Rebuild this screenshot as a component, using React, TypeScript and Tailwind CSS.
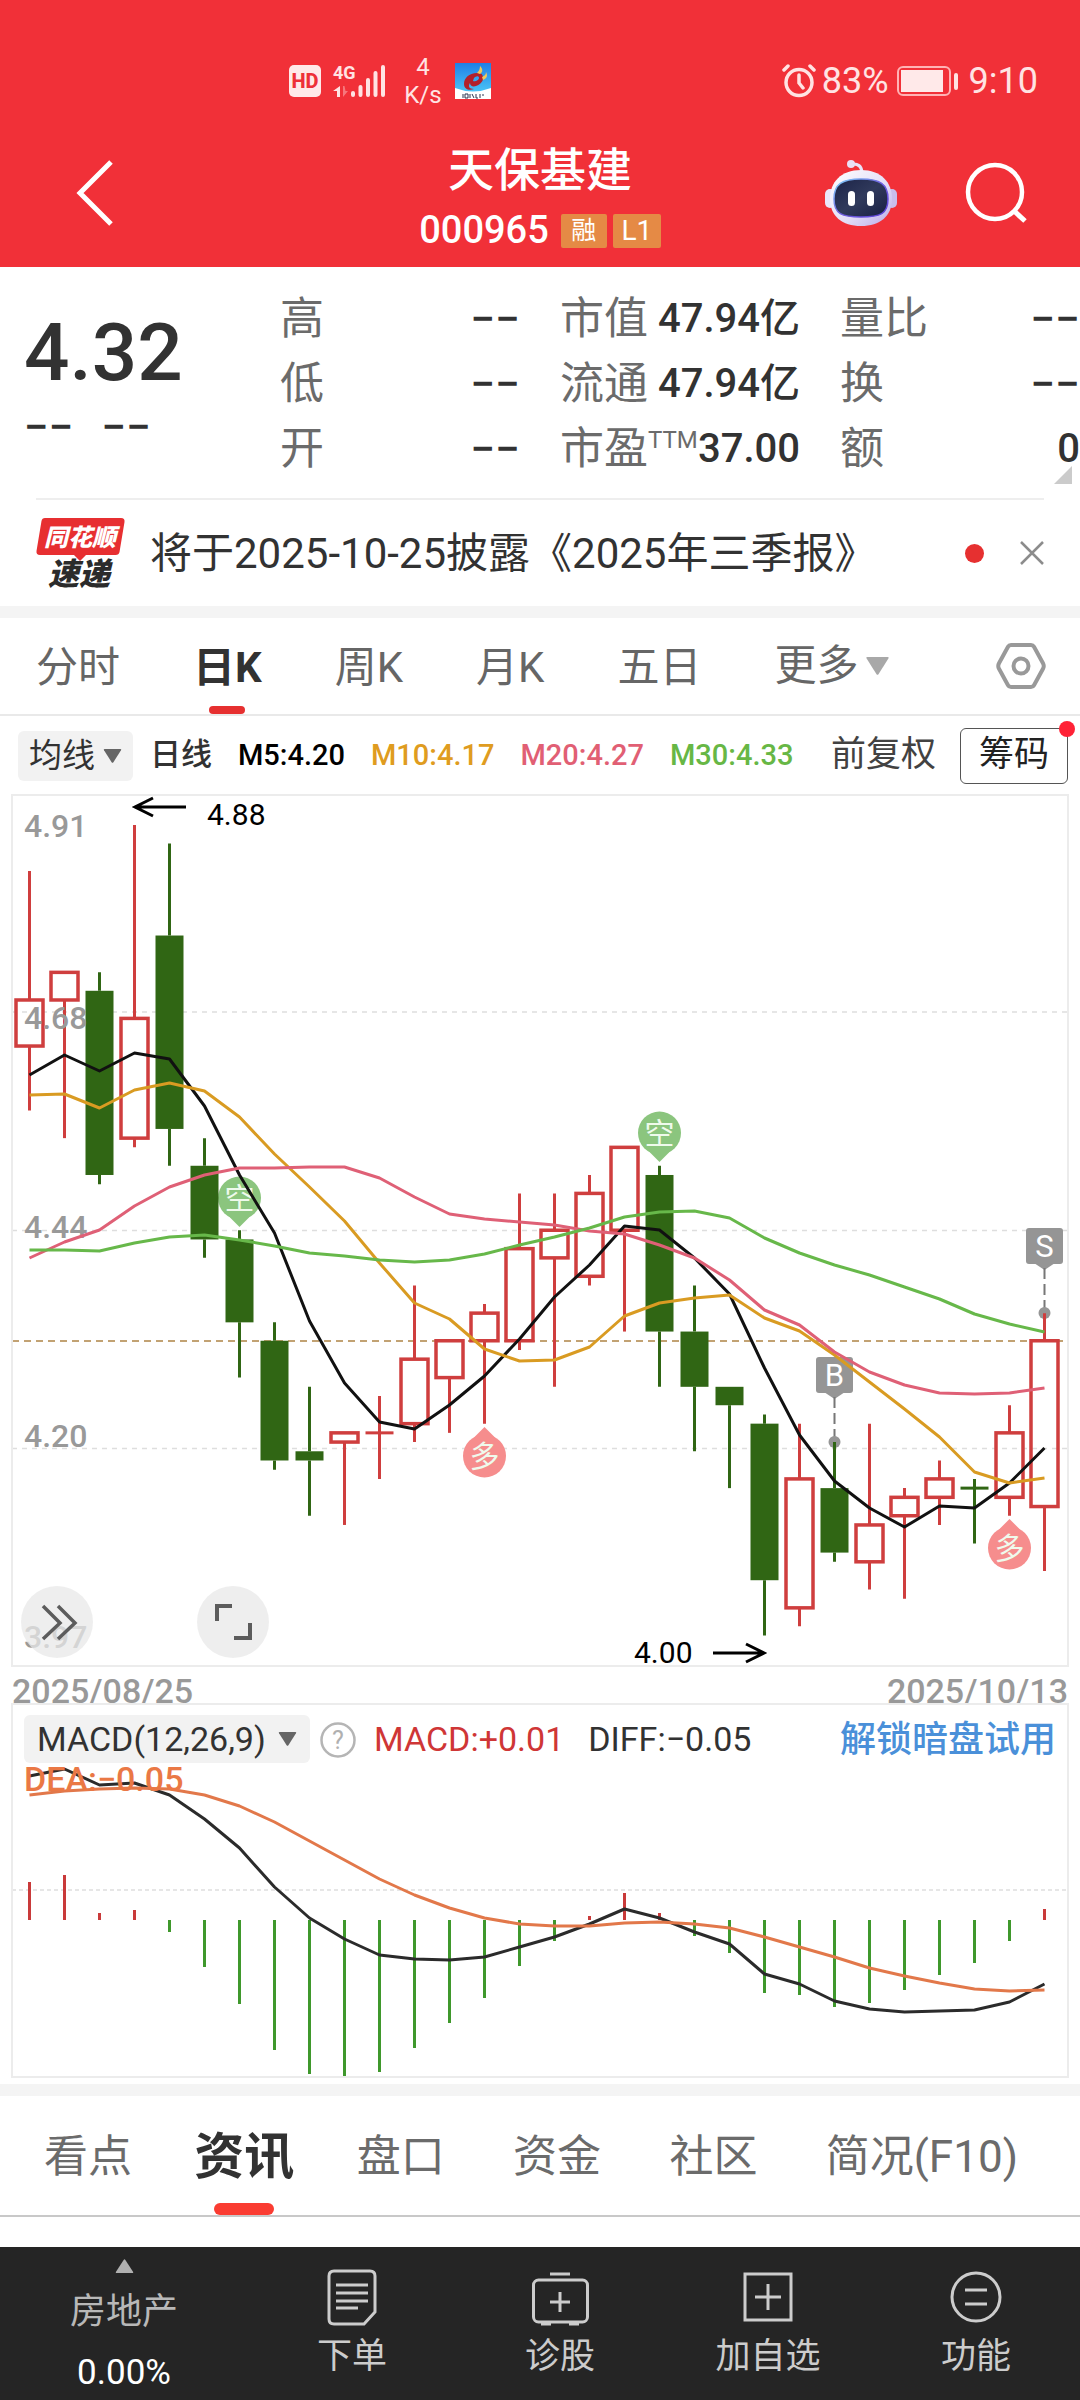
import React from 'react';
import clsx from 'clsx';

// high, body top, body bottom, low, direction
type Candle = [number, number, number, number, 'up' | 'down'];

const candles: Candle[] = [
  [4.83, 4.69, 4.64, 4.57, 'up'],
  [4.72, 4.72, 4.69, 4.54, 'up'],
  [4.72, 4.7, 4.5, 4.49, 'down'],
  [4.88, 4.67, 4.54, 4.53, 'up'],
  [4.86, 4.76, 4.55, 4.51, 'down'],
  [4.54, 4.51, 4.43, 4.41, 'down'],
  [4.44, 4.43, 4.34, 4.28, 'down'],
  [4.34, 4.32, 4.19, 4.18, 'down'],
  [4.27, 4.2, 4.19, 4.13, 'down'],
  [4.22, 4.22, 4.21, 4.12, 'up'],
  [4.26, 4.22, 4.22, 4.17, 'up'],
  [4.38, 4.3, 4.23, 4.21, 'up'],
  [4.32, 4.32, 4.28, 4.22, 'up'],
  [4.36, 4.35, 4.32, 4.23, 'up'],
  [4.48, 4.42, 4.32, 4.31, 'up'],
  [4.48, 4.44, 4.41, 4.27, 'up'],
  [4.5, 4.48, 4.39, 4.38, 'up'],
  [4.53, 4.53, 4.44, 4.33, 'up'],
  [4.51, 4.5, 4.33, 4.27, 'down'],
  [4.38, 4.33, 4.27, 4.2, 'down'],
  [4.27, 4.27, 4.25, 4.16, 'down'],
  [4.24, 4.23, 4.06, 4.0, 'down'],
  [4.23, 4.17, 4.03, 4.01, 'up'],
  [4.21, 4.16, 4.09, 4.08, 'down'],
  [4.23, 4.12, 4.08, 4.05, 'up'],
  [4.16, 4.15, 4.13, 4.04, 'up'],
  [4.19, 4.17, 4.15, 4.12, 'up'],
  [4.17, 4.16, 4.16, 4.1, 'down'],
  [4.25, 4.22, 4.15, 4.13, 'up'],
  [4.35, 4.32, 4.14, 4.07, 'up'],
];

const ma5 = [1075, 1055, 1071, 1053, 1059, 1106, 1175, 1233, 1321, 1383, 1422, 1429, 1405, 1376, 1339, 1297, 1265, 1226, 1230, 1258, 1294, 1368, 1435, 1481, 1508, 1527, 1506, 1508, 1483, 1448];
const ma10 = [1095, 1094, 1108, 1090, 1083, 1091, 1117, 1154, 1187, 1221, 1263, 1303, 1319, 1349, 1361, 1360, 1347, 1316, 1303, 1298, 1295, 1318, 1331, 1355, 1382, 1409, 1437, 1472, 1483, 1478];
const ma20 = [1258, 1242, 1230, 1206, 1187, 1175, 1168, 1168, 1167, 1167, 1178, 1197, 1214, 1219, 1222, 1225, 1231, 1234, 1245, 1258, 1280, 1310, 1325, 1352, 1372, 1385, 1393, 1394, 1393, 1388];
const ma30 = [1250, 1250, 1251, 1243, 1237, 1235, 1240, 1246, 1253, 1256, 1260, 1262, 1260, 1254, 1245, 1237, 1228, 1217, 1212, 1211, 1218, 1238, 1253, 1265, 1275, 1287, 1299, 1314, 1324, 1332];

const macdBars = [1882, 1875, 1913, 1910, 1932, 1967, 2004, 2050, 2074, 2077, 2072, 2048, 2023, 1998, 1966, 1941, 1916, 1893, 1913, 1936, 1953, 1993, 1995, 2007, 2003, 1990, 1975, 1963, 1941, 1909];
const diffLine = [1776, 1769, 1785, 1783, 1795, 1819, 1848, 1887, 1918, 1939, 1955, 1959, 1960, 1957, 1947, 1937, 1924, 1909, 1918, 1932, 1944, 1974, 1984, 2001, 2009, 2012, 2011, 2010, 2002, 1984];
const deaLine = [1795, 1791, 1789, 1788, 1789, 1795, 1806, 1822, 1841, 1860, 1879, 1895, 1908, 1918, 1924, 1926, 1926, 1923, 1922, 1924, 1928, 1937, 1947, 1957, 1968, 1976, 1983, 1989, 1991, 1990];

const UP = '#cf3e3e';
const DOWN = '#306614';

const xAt = (i: number) => 29.5 + i * 35;
const yAt = (price: number) => 825 + (4.88 - price) * 921;
const toPoints = (ys: number[]) => ys.map((y, i) => `${xAt(i)},${y}`).join(' ');

const Caret: React.FC<{ className?: string }> = ({ className }) => (
  <svg viewBox="0 0 20 16" className={className} aria-hidden="true">
    <path d="M1 0h18q1.500 0 .7 1.400L11 15q-1 1.500-2 0L.3 1.400Q-.5 0 1 0z" fill="currentColor" />
  </svg>
);

const StatusBar: React.FC = () => (
  <div className="flex h-[118px] items-center pr-[42px] pl-[289px] pt-11 text-[#ffe3e3]">
    <svg viewBox="0 0 32 32" className="size-8">
      <rect width="32" height="32" rx="5" fill="#ffe9e9" />
      <text x="16" y="23" fontSize="20" fontWeight="800" textAnchor="middle" fill="#ee3038">HD</text>
    </svg>
    <svg viewBox="0 0 54 34" className="ml-3 h-[34px] w-[54px] overflow-visible">
      <text x="0" y="15" fontSize="18" fontWeight="700" fill="currentColor">4G</text>
      <path d="M7 22v11H4v-6H0z" fill="currentColor" />
      <path d="M10 22v11l5-6h-2.500l-1-5z" fill="currentColor" opacity=".4" />
      <g stroke="currentColor" strokeWidth="4" strokeLinecap="round">
        <path d="M20 29v2M27.500 23v8M35 16v15M42.500 9v22M50 3v28" />
      </g>
    </svg>
    <div className="ml-4 w-10 text-center text-2xl leading-7">
      <div>4</div>
      <div>K/s</div>
    </div>
    <svg viewBox="0 0 36 36" className="ml-3 size-9">
      <defs>
        <linearGradient id="sky" x1="0" y1="0" x2="0" y2="1">
          <stop offset="0" stopColor="#1f7fe6" />
          <stop offset="1" stopColor="#4ac3f6" />
        </linearGradient>
      </defs>
      <rect width="36" height="36" fill="#fff" />
      <path d="M0 0h36v25q-18 7-36 0z" fill="url(#sky)" />
      <path d="M22 10c-8 0-13 5-13 11 0 5 5 7 10 5-5 0-6-3-4-6 0 3 3 4 6 3 7-2 10-10 4-13-3-1-8 3-7 6 2-3 6-4 6-1 0 2-4 4-6 3 1-4 3-6 4-8z" fill="#b3202a" />
      <path d="M22 10c2-2 3-4 3-7 3 3 3 6 0 8zM27 14c3-1 4-3 4-5 2 4 1 6-3 8z" fill="#f3c85a" />
      <path d="M8 31v4M10 31h3v4h-3zM15 31v4M17 31l2 4M21 31v4h2M25 31v4M27 32h2" stroke="#2b3550" strokeWidth="1" fill="none" />
    </svg>
    <div className="ml-auto flex items-center text-4xl">
      <svg viewBox="0 0 34 34" className="size-[34px]" fill="none" stroke="currentColor" strokeWidth="3.500" strokeLinecap="round">
        <circle cx="17" cy="18.500" r="13" />
        <path d="M17 11v8l4 5M2 6l4-4M32 6l-4-4" />
      </svg>
      <span className="ml-1.5">83%</span>
      <svg viewBox="0 0 62 30" className="ml-2 h-[30px] w-[62px]">
        <rect x="1" y="1" width="52" height="28" rx="5" fill="none" stroke="#ffb3b5" strokeWidth="2" />
        <rect x="4" y="4" width="42" height="22" fill="#ffe9e9" />
        <rect x="57" y="7" width="4" height="17" rx="2" fill="currentColor" />
      </svg>
      <span className="ml-2.5">9:10</span>
    </div>
  </div>
);

const RobotIcon: React.FC = () => (
  <svg viewBox="0 0 72 68" className="h-[68px] w-[72px]">
    <defs>
      <linearGradient id="shell" x1="0" y1="0" x2="1" y2="1">
        <stop offset="0" stopColor="#ffffff" />
        <stop offset=".6" stopColor="#e2dcf7" />
        <stop offset="1" stopColor="#b9a9e8" />
      </linearGradient>
      <linearGradient id="face" x1="0" y1="0" x2="1" y2="1">
        <stop offset="0" stopColor="#1c2347" />
        <stop offset=".5" stopColor="#303a5c" />
        <stop offset="1" stopColor="#181f42" />
      </linearGradient>
      <linearGradient id="rim" x1="0" y1="0" x2="1" y2="1">
        <stop offset="0" stopColor="#7fd3f7" />
        <stop offset=".5" stopColor="#6f5fe0" />
        <stop offset="1" stopColor="#5b3fd6" />
      </linearGradient>
    </defs>
    <path d="M27 5q9-1 10 8" fill="none" stroke="#e9e2f8" strokeWidth="3" />
    <circle cx="26" cy="5" r="4" fill="#eadff5" />
    <rect x="0" y="30" width="10" height="19" rx="5" fill="#eae6fa" />
    <rect x="62" y="30" width="10" height="19" rx="5" fill="#c9bdec" />
    <path d="M36 11c20 0 31 12 31 29S55 67 36 67 5 57 5 40s11-29 31-29z" fill="url(#shell)" />
    <path d="M36 20c19 0 27 5 27 20s-8 18-27 18S9 55 9 40s8-20 27-20z" fill="url(#face)" stroke="url(#rim)" strokeWidth="1.500" />
    <rect x="23" y="32" width="7" height="15" rx="3.500" fill="#fff" />
    <rect x="42" y="32" width="7" height="15" rx="3.500" fill="#fff" />
  </svg>
);

const Header: React.FC = () => (
  <header className="bg-[#f13038] text-white">
    <StatusBar />
    <div className="grid h-[149px] grid-cols-[1fr_auto_1fr] items-center">
      <button type="button" aria-label="返回" className="ml-[74px] w-10">
        <svg viewBox="0 0 40 66" className="h-[66px] w-10">
          <path d="M37 2L6 33l31 31" fill="none" stroke="currentColor" strokeWidth="5" />
        </svg>
      </button>
      <div className="flex flex-col items-center pt-3">
        <h1 className="text-[46px] leading-[56px] font-medium">天保基建</h1>
        <div className="mt-2 flex h-[50px] items-center">
          <span className="text-[38px] font-medium">000965</span>
          <span className="ml-3 flex h-[34px] w-[46px] items-center justify-center rounded-xs bg-[#e58a45] text-[25px]">融</span>
          <span className="ml-1.5 flex h-[34px] w-12 items-center justify-center rounded-xs bg-[#e58a45] text-[28px]">L1</span>
        </div>
      </div>
      <div className="flex items-center justify-end gap-[68px] pr-[53px]">
        <button type="button" aria-label="智能助手">
          <RobotIcon />
        </button>
        <button type="button" aria-label="搜索">
          <svg viewBox="0 0 62 62" className="size-[62px]" fill="none" stroke="currentColor" strokeWidth="4.500">
            <circle cx="30" cy="30" r="27" />
            <path d="M48 48l12 11" strokeWidth="5" />
          </svg>
        </button>
      </div>
    </div>
  </header>
);

const quoteColumns: { label: string; sup?: string; value: string }[][] = [
  [
    { label: '高', value: '−−' },
    { label: '低', value: '−−' },
    { label: '开', value: '−−' },
  ],
  [
    { label: '市值', value: '47.94亿' },
    { label: '流通', value: '47.94亿' },
    { label: '市盈', sup: 'TTM', value: '37.00' },
  ],
  [
    { label: '量比', value: '−−' },
    { label: '换', value: '−−' },
    { label: '额', value: '0' },
  ],
];

const Quote: React.FC = () => (
  <section className="relative flex h-[231px]">
    <div className="w-[280px] shrink-0 pt-[38px] pl-6 text-[#323232]">
      <div className="text-[80px] leading-[96px] font-medium">4.32</div>
      <div className="flex gap-7 text-[44px] leading-[52px] font-medium">
        <span>−−</span>
        <span>−−</span>
      </div>
    </div>
    <div className="grid flex-1 grid-cols-3 gap-10 pt-[19px]">
      {quoteColumns.map((rows, i) => (
        <dl key={i}>
          {rows.map((row) => (
            <div key={row.label} className="flex h-[65px] items-center justify-between whitespace-nowrap">
              <dt className="flex text-[44px] text-[#6b6b6b]">
                {row.label}
                {row.sup && <span className="pt-2 text-2xl">{row.sup}</span>}
              </dt>
              <dd
                className={clsx(
                  'font-medium text-[#323232]',
                  row.value === '−−' ? 'text-[44px]' : 'text-[40px]',
                )}
              >
                {row.value}
              </dd>
            </div>
          ))}
        </dl>
      ))}
    </div>
    <svg viewBox="0 0 18 18" className="absolute right-2 bottom-3.5 size-[18px]">
      <path d="M18 0v18H0z" fill="#cbcbcb" />
    </svg>
  </section>
);

const News: React.FC = () => (
  <section className="mx-9 flex h-[108px] items-center border-t-2 border-[#eeeeee]">
    <svg viewBox="0 0 90 72" className="h-[72px] w-[90px] shrink-0 overflow-visible">
      <path d="M9 1h76q4 0 3.500 4l-5 30q-.5 3-4 3H50l-6 6-6-6H4q-4 0-3.500-4l5-30Q6 1 9 1z" fill="#e72f31" />
      <text x="44" y="29" fontSize="24" fontWeight="900" fontStyle="italic" textAnchor="middle" fill="#fff">同花顺</text>
      <text x="43" y="68" fontSize="31" fontWeight="900" fontStyle="italic" textAnchor="middle" fill="#2b2b2b">速递</text>
    </svg>
    <a href="#news" className="ml-6 text-[42px] whitespace-nowrap text-[#323232]">将于2025-10-25披露《2025年三季报》</a>
    <span className="ml-auto size-[19px] rounded-full bg-[#e63030]" />
    <button type="button" aria-label="关闭" className="ml-9">
      <svg viewBox="0 0 24 24" className="size-6">
        <path d="M1 1l22 22M23 1L1 23" stroke="#8c8c8c" strokeWidth="2.500" />
      </svg>
    </button>
  </section>
);

const periods = ['分时', '日K', '周K', '月K', '五日'];

const PeriodTabs: React.FC = () => (
  <nav className="flex h-[98px] items-stretch gap-[73px] border-b-2 border-[#e9e9e9] pr-[34px] pl-9 text-[42px] text-[#666666]">
    {periods.map((name) => {
      const active = name === '日K';
      return (
        <button
          key={name}
          type="button"
          className={clsx('flex flex-col items-center whitespace-nowrap', active && 'font-bold text-[#323232]')}
        >
          <span className="flex-1 leading-[100px]">{name}</span>
          {active && <span className="-mt-3 h-[9px] w-9 rounded-full bg-[#e63030]" />}
        </button>
      );
    })}
    <button type="button" aria-haspopup="menu" className="flex items-center gap-2 leading-[100px] whitespace-nowrap">
      更多
      <Caret className="h-[18px] w-[23px] text-[#a8a8a8]" />
    </button>
    <button type="button" aria-label="设置" className="ml-auto">
      <svg viewBox="0 0 50 48" className="h-12 w-[50px]" fill="none" stroke="#999999" strokeWidth="4">
        <path d="M15 3h20q2 0 3 1.800l9 16.400q1.500 2.800 0 5.600l-9 16.400Q37 45 35 45H15q-2 0-3-1.800L3 26.800q-1.500-2.800 0-5.600L12 4.800Q13 3 15 3z" />
        <circle cx="25" cy="24" r="7.500" />
      </svg>
    </button>
  </nav>
);

const Indicators: React.FC = () => (
  <section className="flex h-[79px] items-center pr-3 pl-[18px] text-[29px] font-medium whitespace-nowrap">
    <div className="flex h-[50px] items-center gap-2 rounded-md bg-[#f2f2f2] px-[11px] font-normal text-[#323232]">
      <select aria-label="指标" className="appearance-none bg-transparent text-[33px]">
        <option>均线</option>
      </select>
      <Caret className="h-[14px] w-[19px] text-[#666666]" />
    </div>
    <span className="ml-[17px] text-[31px] text-[#323232]">日线</span>
    <span className="ml-[26px] text-black">M5:4.20</span>
    <span className="ml-[26px] text-[#df9c20]">M10:4.17</span>
    <span className="ml-[26px] text-[#e15f74]">M20:4.27</span>
    <span className="ml-[26px] text-[#67b745]">M30:4.33</span>
    <div className="ml-auto flex items-center gap-6 text-[35px] font-normal text-[#424242]">
      <button type="button">前复权</button>
      <button type="button" className="relative h-14 rounded-md border border-[#555555] px-[18px] text-[#222222]">
        筹码
        <span className="absolute -top-2 -right-2 size-4 rounded-full bg-[#ff2236]" />
      </button>
    </div>
  </section>
);

const SignalPin: React.FC<{ x: number; y: number; label: '空' | '多' }> = ({ x, y, label }) => {
  const color = label === '空' ? '#8bc57e' : '#f68d8d';
  const d = label === '空' ? -1 : 1;
  return (
    <g>
      <circle cx={x} cy={y} r="21.500" fill={color} />
      <path d={`M${x - 11} ${y - d * 18}L${x} ${y - d * 29}L${x + 11} ${y - d * 18}z`} fill={color} />
      <text x={x} y={y + 11} fontSize="30" textAnchor="middle" fill="#effaec">{label}</text>
    </g>
  );
};

const TradeFlag: React.FC<{ x: number; y: number; label: string }> = ({ x, y, label }) => (
  <g>
    <rect x={x - 18.5} y={y} width="37" height="36" rx="3" fill="#959595" />
    <path d={`M${x - 9} ${y + 36}h18l-9 6z`} fill="#959595" />
    <path d={`M${x} ${y + 40}v45`} stroke="#777777" strokeWidth="2" strokeDasharray="11 5" />
    <circle cx={x} cy={y + 85} r="6" fill="#959595" />
    <text x={x} y={y + 29} fontSize="31" textAnchor="middle" fill="#ffffff">{label}</text>
  </g>
);

const CandleChart: React.FC = () => (
  <svg viewBox="12 795 1056 871" className="block w-full overflow-visible">
    <g stroke="#dedede" strokeWidth="1.500" strokeDasharray="5 5">
      <path d="M12 1012h1056M12 1230.500h1056M12 1448.500h1056" />
    </g>
    <path d="M12 1341h1056" stroke="#c2a273" strokeWidth="2" strokeDasharray="7 5" />
    <SignalPin x={239.5} y={1198} label="空" />
    <TradeFlag x={834.5} y={1357} label="B" />
    <TradeFlag x={1044.5} y={1228} label="S" />
    {candles.map(([high, top, bottom, low, dir], i) => {
      const x = xAt(i);
      const color = dir === 'up' ? UP : DOWN;
      const flat = top === bottom;
      return (
        <g key={i} stroke={color} strokeWidth="3">
          <path d={`M${x} ${yAt(high)}V${yAt(top)}M${x} ${yAt(bottom)}V${yAt(low)}`} />
          {flat && <path d={`M${x - 14} ${yAt(top)}h28`} />}
          {!flat && dir === 'up' && (
            <rect x={x - 13.5} y={yAt(top)} width="27" height={yAt(bottom) - yAt(top)} fill="none" strokeWidth="3.500" />
          )}
          {!flat && dir === 'down' && (
            <rect x={x - 14} y={yAt(top)} width="28" height={yAt(bottom) - yAt(top)} fill={color} stroke="none" />
          )}
        </g>
      );
    })}
    <g fontSize="32" fontWeight="500" fill="#999999">
      <text x="24" y="837">4.91</text>
      <text x="24" y="1029">4.68</text>
      <text x="24" y="1238">4.44</text>
      <text x="24" y="1447">4.20</text>
      <text x="24" y="1648">3.97</text>
    </g>
    <g fill="none" strokeWidth="3" strokeLinejoin="round">
      <polyline points={toPoints(ma5)} stroke="#111111" />
      <polyline points={toPoints(ma10)} stroke="#d99b22" />
      <polyline points={toPoints(ma20)} stroke="#df6076" />
      <polyline points={toPoints(ma30)} stroke="#67b84a" />
    </g>
    <SignalPin x={659.5} y={1133} label="空" />
    <SignalPin x={484.5} y={1456} label="多" />
    <SignalPin x={1009.5} y={1548} label="多" />
    <g fontSize="30" fill="#000000">
      <text x="207" y="825">4.88</text>
      <text x="634" y="1663">4.00</text>
    </g>
    <path d="M186 807h-51M153 798l-18 9 18 9M713 1653h51M746 1644l18 9-18 9" fill="none" stroke="#000000" strokeWidth="3" />
  </svg>
);

const MacdChart: React.FC = () => (
  <svg viewBox="12 1764 1056 313" className="block w-full overflow-visible">
    <path d="M12 1890h1056" stroke="#dedede" strokeWidth="1.500" strokeDasharray="4 3" />
    {macdBars.map((y, i) => (
      <path key={i} d={`M${xAt(i)} 1920V${y}`} stroke={y < 1920 ? '#c93a3a' : '#3f982c'} strokeWidth="3" />
    ))}
    <g fill="none" strokeWidth="3" strokeLinejoin="round">
      <polyline points={toPoints(diffLine)} stroke="#2b2b2b" />
      <polyline points={toPoints(deaLine)} stroke="#e2784a" />
    </g>
    <text x="24" y="1791" fontSize="34" fontWeight="500" fill="#ea7845">DEA:−0.05</text>
  </svg>
);

const Charts: React.FC = () => (
  <section className="px-3">
    <div className="relative outline-2 -outline-offset-1 outline-[#ececec]">
      <CandleChart />
      <div className="absolute bottom-2 left-[9px] flex gap-[104px]">
        <button type="button" aria-label="展开" className="size-[72px] rounded-full bg-[#e8e8e8]/75">
          <svg viewBox="0 0 72 72" className="size-[72px]" fill="none" stroke="#5c5c5c" strokeWidth="3.500">
            <path d="M22 20l17 17-17 16M37 20l17 17-17 16" />
          </svg>
        </button>
        <button type="button" aria-label="全屏" className="size-[72px] rounded-full bg-[#e8e8e8]/75">
          <svg viewBox="0 0 72 72" className="size-[72px]" fill="none" stroke="#5c5c5c" strokeWidth="4">
            <path d="M35 20H20v15M53 37v15H37" />
          </svg>
        </button>
      </div>
    </div>
    <div className="flex h-[38px] items-end justify-between text-[34px] leading-[26px] font-medium text-[#999999]">
      <span>2025/08/25</span>
      <span>2025/10/13</span>
    </div>
    <div className="outline-2 -outline-offset-1 outline-[#ececec]">
      <div className="flex h-[60px] items-end px-3 text-[34px] whitespace-nowrap">
        <div className="mb-px flex h-12 items-center gap-3 rounded-md bg-[#f2f2f2] px-[13px] text-[#323232]">
          <select aria-label="副图指标" className="appearance-none bg-transparent">
            <option>MACD(12,26,9)</option>
          </select>
          <Caret className="h-[14px] w-[19px] text-[#666666]" />
        </div>
        <button type="button" aria-label="说明" className="ml-2.5 self-end pb-1.5">
          <svg viewBox="0 0 36 36" className="size-9">
            <circle cx="18" cy="18" r="16.500" fill="none" stroke="#b5b5b5" strokeWidth="2.500" />
            <text x="18" y="27" fontSize="25" textAnchor="middle" fill="#b0b0b0">?</text>
          </svg>
        </button>
        <span className="ml-[18px] leading-[50px] text-[#cf3636]">MACD:+0.01</span>
        <span className="ml-6 leading-[50px] text-[#323232]">DIFF:−0.05</span>
        <a href="#trial" className="ml-auto text-[36px] leading-[48px] font-medium text-[#4a90d9]">解锁暗盘试用</a>
      </div>
      <MacdChart />
    </div>
  </section>
);

const sections = ['看点', '资讯', '盘口', '资金', '社区', '简况(F10)'];

const SectionTabs: React.FC = () => (
  <nav className="flex h-[121px] justify-between border-b-2 border-[#c8c8c8] pr-[62px] pl-11 text-[44px] text-[#6b6b6b]">
    {sections.map((name) => {
      const active = name === '资讯';
      return (
        <button
          key={name}
          type="button"
          className={clsx('flex flex-col items-center whitespace-nowrap', active && '-mx-1.5 text-[50px] font-bold text-[#323232]')}
        >
          <span className="flex-1 leading-[123px]">{name}</span>
          {active && <span className="-mt-4 h-3 w-[60px] rounded-full bg-[#fa3c32]" />}
        </button>
      );
    })}
  </nav>
);

const actions: { label: string; icon: React.ReactNode }[] = [
  {
    label: '下单',
    icon: (
      <>
        <path d="M10 2h36q5 0 5 5v36l-11 12H10q-5 0-5-5V7q0-5 5-5z" />
        <path d="M12 16h32M12 24h32M12 32h32M12 39h22" />
      </>
    ),
  },
  {
    label: '诊股',
    icon: (
      <>
        <path d="M18 5h20" />
        <rect x="1.500" y="11" width="54" height="42" rx="5" />
        <path d="M28 23v20M18 33h20M9 55h10M37 55h10" />
      </>
    ),
  },
  {
    label: '加自选',
    icon: (
      <>
        <rect x="5" y="5" width="46" height="46" />
        <path d="M28 15v26M15 28h26" />
      </>
    ),
  },
  {
    label: '功能',
    icon: (
      <>
        <circle cx="28" cy="28" r="24" />
        <path d="M17 21h22M17 35h22" />
      </>
    ),
  },
];

const BottomBar: React.FC = () => (
  <footer className="flex h-[153px] bg-[#252525] text-[#cccccc]">
    <button type="button" className="flex w-[248px] flex-col items-center">
      <Caret className="mt-3 h-[14px] w-[25px] rotate-180 text-[#b0b0b0]" />
      <span className="mt-3 text-4xl leading-[54px] text-[#b8b8b8]">房地产</span>
      <span className="mt-2 text-[35px] leading-[52px] text-white">0.00%</span>
    </button>
    {actions.map(({ label, icon }) => (
      <button key={label} type="button" className="flex flex-1 flex-col items-center pt-[22px]">
        <svg viewBox="0 0 57 58" className="h-[58px] w-[57px]" fill="none" stroke="currentColor" strokeWidth="3">
          {icon}
        </svg>
        <span className="mt-1 text-[35px] leading-[52px]">{label}</span>
      </button>
    ))}
  </footer>
);

const App: React.FC = () => {
  return (
    <div className="flex min-h-screen flex-col overflow-hidden bg-white font-['Roboto','Noto_Sans_CJK_SC',sans-serif]">
      <Header />
      <main>
        <Quote />
        <News />
        <div className="h-3 bg-[#f4f4f4]" />
        <PeriodTabs />
        <Indicators />
        <Charts />
        <div className="mt-[7px] h-3 bg-[#f4f4f4]" />
        <SectionTabs />
      </main>
      <div className="mt-auto">
        <BottomBar />
      </div>
    </div>
  );
};

export default App;
